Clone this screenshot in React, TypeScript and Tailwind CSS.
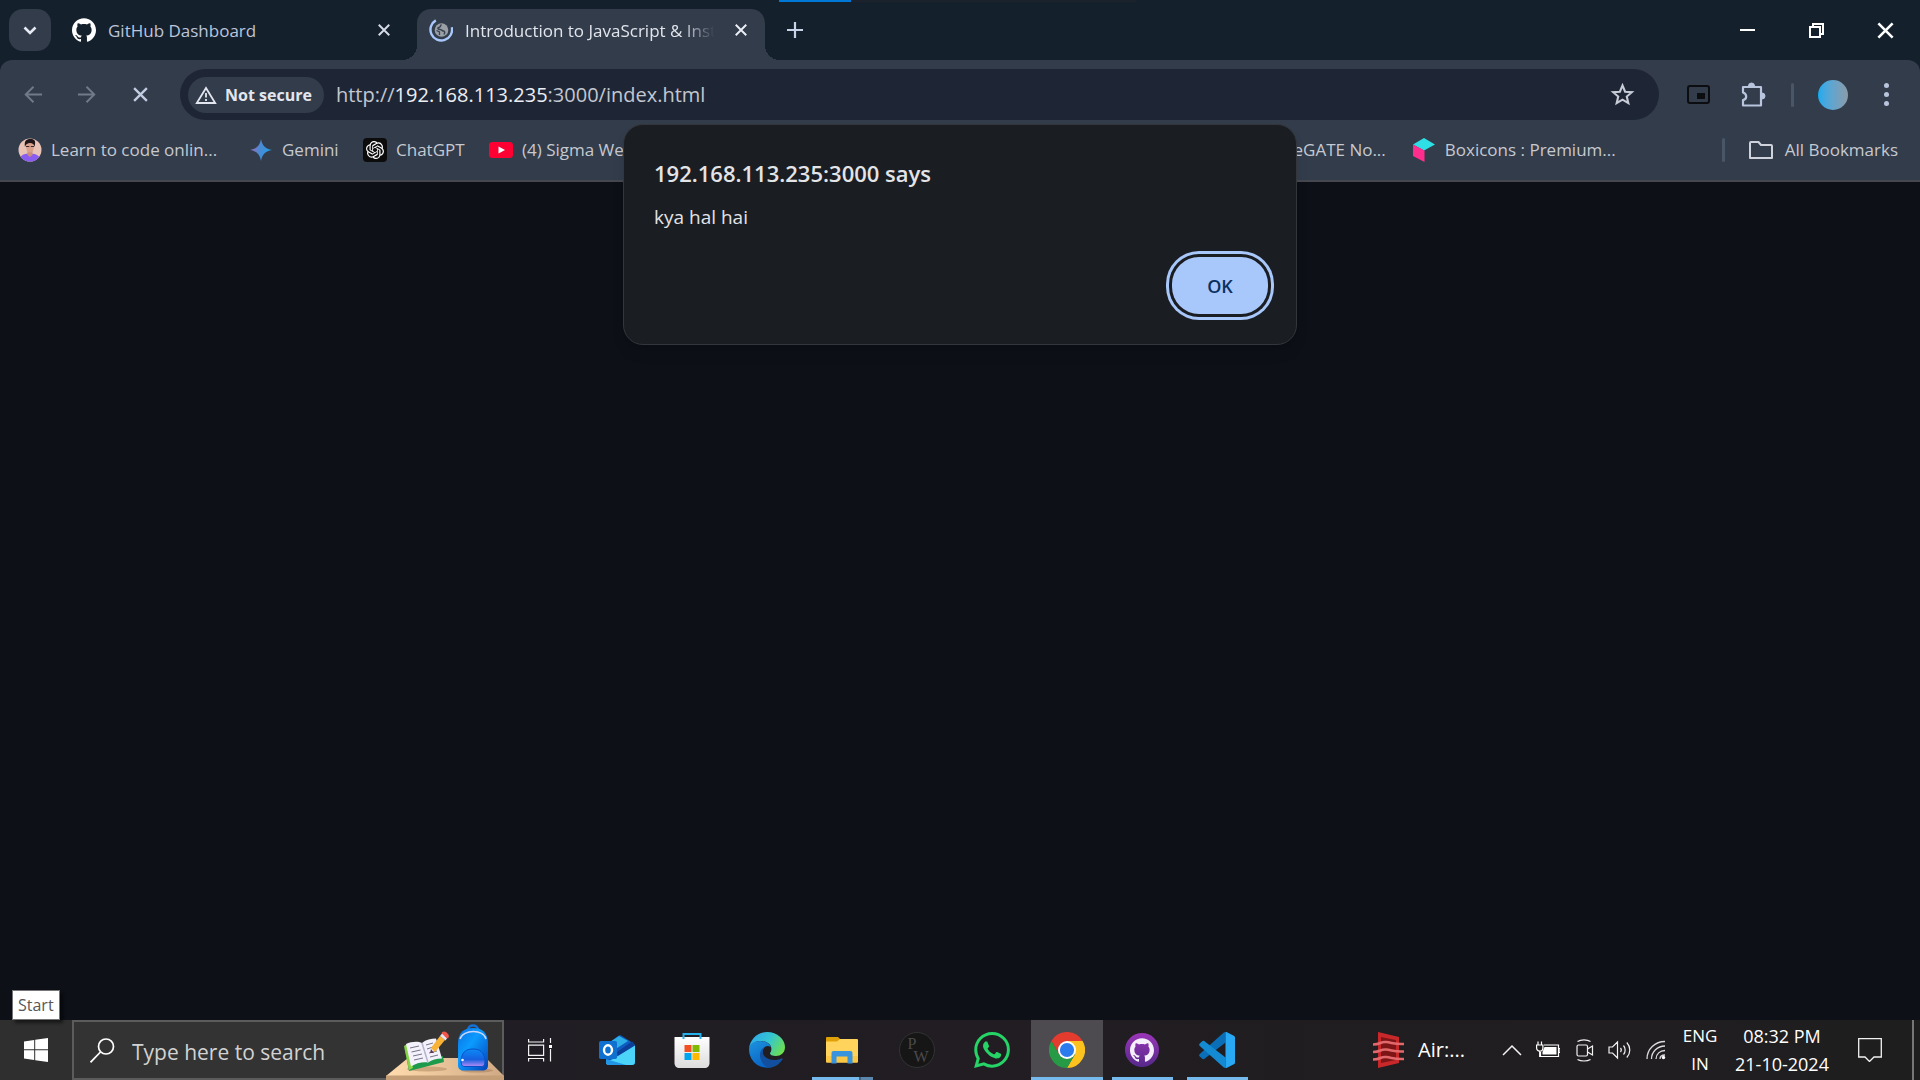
import React from "react";
import { SiGithub, SiOpenai, SiWhatsapp } from "react-icons/si";

type IconProps = { className?: string };

const XIcon = ({ className }: IconProps) => (
  <svg viewBox="0 0 16 16" className={className} fill="none" stroke="currentColor" strokeWidth="2.2">
    <path d="M2 2l12 12M14 2L2 14" />
  </svg>
);

const ArrowIcon = ({ className }: IconProps) => (
  <svg viewBox="0 0 20 20" className={className} fill="none" stroke="currentColor" strokeWidth="2">
    <path d="M19 10H2.5M10 1.8L1.8 10l8.2 8.2" />
  </svg>
);

const LoadingGlobe = ({ className }: IconProps) => (
  <svg viewBox="0 0 24 24" className={className} fill="none">
    <path d="M6.8 2.4A10.8 10.8 0 1 0 22.8 9.3" stroke="#a8c7fa" strokeWidth="2.4" />
    <circle cx="12.5" cy="12" r="6.8" fill="#9aa0a6" />
    <path d="M12.500 6.500c-1.500 1-.5 2.500-2.500 3s-1 2 1 2 2 1.500 3.500 1.500 1.500 1.500.5 3.500" stroke="#3a4350" strokeWidth="1.500" />
    <path d="M7.500 12.500l3 1.500v3" stroke="#3a4350" strokeWidth="1.300" />
  </svg>
);

const WarningIcon = ({ className }: IconProps) => (
  <svg viewBox="0 0 22 18" className={className} fill="none" stroke="#e3e6ee">
    <path d="M11 2L20.200 17H1.800z" strokeWidth="1.800" />
    <path d="M11 7v4.500M11 13v2" strokeWidth="1.800" />
  </svg>
);

const StarIcon = ({ className }: IconProps) => (
  <svg viewBox="0 0 24 24" className={className} fill="none" stroke="#c8ccd6" strokeWidth="2">
    <path d="M12 3.300l2.500 6 6.500.500-4.900 4.200 1.500 6.300L12 17l-5.600 3.300 1.500-6.300L3 9.800l6.500-.500z" />
  </svg>
);

const PuzzleIcon = ({ className }: IconProps) => (
  <svg viewBox="0 0 26 26" className={className}>
    <path d="M3 5h18v18.500H3v-5.500c4-.500 4.500-6 0-7.500z" fill="none" stroke="#b9c4dd" strokeWidth="2.200" strokeLinejoin="round" />
    <path d="M8.500 4a3 3 0 0 1 6 0zM22 11a3 3 0 0 1 0 6z" fill="#b9c4dd" stroke="#b9c4dd" />
  </svg>
);

const GeminiIcon = ({ className }: IconProps) => (
  <svg viewBox="0 0 22 22" className={className}>
    <defs>
      <linearGradient id="gem" x1="0" x2="1" y1="0.400" y2="0.600">
        <stop offset="0" stopColor="#9a6fb5" />
        <stop offset="0.450" stopColor="#4a8ad4" />
        <stop offset="1" stopColor="#1fa0e8" />
      </linearGradient>
    </defs>
    <path d="M11 0c1 6.500 4.500 10 11 11-6.500 1-10 4.500-11 11-1-6.500-4.500-10-11-11C6.500 10 10 6.500 11 0z" fill="url(#gem)" />
  </svg>
);

const PersonIcon = ({ className }: IconProps) => (
  <svg viewBox="0 0 24 24" className={className}>
    <clipPath id="face">
      <circle cx="12" cy="12" r="11.500" />
    </clipPath>
    <g clipPath="url(#face)">
      <rect width="24" height="24" fill="#e9c4b6" />
      <path d="M1 24c0-6 4-8.500 11-8.500s11 3 11 8.500z" fill="#8a5cf0" />
      <path d="M9.500 12h5v5l-2.500 2-2.500-2z" fill="#c98f7c" />
      <ellipse cx="12" cy="9" rx="4" ry="5.500" fill="#d9a28d" />
      <path d="M7 9C6 3 8 1 12.500 1S18 3 16.500 9c-.5-3-2-4-4.500-4S8 6 7 9z" fill="#20161a" />
      <path d="M8 8.500h3.300M12.800 8.500h3.200" stroke="#3c2a30" strokeWidth="1" />
    </g>
  </svg>
);

const BoxiconsIcon = ({ className }: IconProps) => (
  <svg viewBox="0 0 22 24" className={className}>
    <path d="M11 0l11 6.500L11 12.500 0 6.500z" fill="#2fdfe6" />
    <path d="M0 6.500l11.500 6V24L0 18z" fill="#ff2e8e" />
  </svg>
);

const YoutubeIcon = ({ className }: IconProps) => (
  <svg viewBox="0 0 24 16" className={className}>
    <rect width="24" height="16" rx="3.500" fill="#ff0033" />
    <path d="M9.500 4.500l6.500 3.500-6.500 3.500z" fill="#fff" />
  </svg>
);

const FolderIcon = ({ className }: IconProps) => (
  <svg viewBox="0 0 24 20" className={className} fill="none" stroke="#cfd2da" strokeWidth="2">
    <path d="M2 2h7.500l2.500 3h10a1 1 0 0 1 1 1v12H1V3a1 1 0 0 1 1-1z" strokeLinejoin="round" />
  </svg>
);

const DeskArt = ({ className }: IconProps) => (
  <svg viewBox="0 0 118 58" className={className}>
    <defs>
      <linearGradient id="desk" x1="0" x2="1">
        <stop offset="0" stopColor="#ffdcae" />
        <stop offset="1" stopColor="#d0a984" />
      </linearGradient>
      <linearGradient id="bag" x1="0" x2="1" y1="0" y2="1">
        <stop offset="0" stopColor="#0a6fe0" />
        <stop offset="0.400" stopColor="#0b9bff" />
        <stop offset="1" stopColor="#0442b8" />
      </linearGradient>
      <linearGradient id="pocket" x1="0" x2="0" y1="0" y2="1">
        <stop offset="0" stopColor="#0b8af5" />
        <stop offset="0.600" stopColor="#1660e0" />
        <stop offset="1" stopColor="#b78cf5" />
      </linearGradient>
    </defs>
    <path d="M22 36h78l18 18H0z" fill="url(#desk)" />
    <path d="M0 53.500h118V58H0z" fill="#c39e76" />
    <ellipse cx="41" cy="47" rx="20" ry="2.500" fill="#b98f68" opacity="0.600" />
    <ellipse cx="91" cy="48.500" rx="16" ry="2" fill="#a98262" opacity="0.600" />
    <path d="M18 24l5 25 35-9-1-6-33 9z" fill="#1e9a4c" />
    <path d="M18 24l5 24 4-2-6-24z" fill="#8bd346" />
    <path d="M20 22c5-2.500 12-3 16-1 4-3.500 9-4.500 14-4.500l6 20c-6 0-10 1.500-14 4-5-1-12 .5-17 4z" fill="#f3f1fb" />
    <path d="M36 21l6 19.500" stroke="#b7b3cf" strokeWidth="1.500" />
    <path d="M24 26l9-2M25.500 30l9-2M27 34l9-2M28 38l9-2M40 23l7-2M41 27l6-2M43 31l8-2M44 35l8-2" stroke="#777488" strokeWidth="1" />
    <path d="M45 27l3 4-4 0z" fill="#5b3a55" />
    <path d="M45 26l9-12 5 4-10 12z" fill="#f9b233" />
    <path d="M54 14l2.500-3 5.500 4-2.500 3.500z" fill="#e9e4ef" />
    <path d="M56.500 11c2-2 6 1 5.500 4l-1 .5z" fill="#f2564a" stroke="#f2564a" strokeWidth="1.500" />
    <path d="M82 8c0-6 10-6 10 0" fill="none" stroke="#1471d8" strokeWidth="2.500" />
    <path d="M72 22C72 10 78 6 87 6s15 4 15 16v21c0 4-2 5.500-6 5.500H78c-4 0-6-1.500-6-5.500z" fill="url(#bag)" />
    <path d="M74 17C77 7 98 7 100 17" fill="none" stroke="#c9d7ff" strokeWidth="1.500" />
    <path d="M75 38c1-8 5-11 12-11s11 3 12 11c0 5-1 6.500-4 6.500H79c-3 0-4-1.500-4-6.500z" fill="url(#pocket)" stroke="#0a4fc4" strokeWidth="1" />
    <circle cx="76.500" cy="38" r="1.300" fill="#fff" />
  </svg>
);

const TaskViewIcon = ({ className }: IconProps) => (
  <svg viewBox="0 0 24 24" className={className} fill="none" stroke="#f2f2f2" strokeWidth="1.200">
    <path d="M.6 1v3h15V1M.6 7.200h15v10.200H.6zM.6 23.500v-3h15v3M22.500 0v5M22.500 11v12.500" />
    <path d="M21 7h3v3h-3z" fill="#fff" stroke="none" />
  </svg>
);

const OutlookIcon = ({ className }: IconProps) => (
  <svg viewBox="0 0 36 36" className={className}>
    <path d="M8 12L19.500 3.700c1-.6 2-.6 3 0L34 11c1.500 1 2 2 2 3.500V30c0 2-1 3-3 3H10c-2 0-3-1-3-3z" fill="#0f5dc0" />
    <path d="M8 12L20 4l9 5-17 11z" fill="#2daee6" />
    <path d="M18 20L33 9.500c2 1.500 3 2.500 3 5L19 25z" fill="#0b3f99" />
    <path d="M14 27l22-13.500V30c0 2-1 3-3 3H10c-2 0-3-1-3-3z" fill="#4bd3fa" />
    <path d="M7 27l20 6H10c-2 0-3-1-3-3z" fill="#2195e6" />
    <rect x="0" y="9" width="18" height="18" rx="1.800" fill="#1070d0" />
    <ellipse cx="9" cy="18" rx="4" ry="4.700" fill="none" stroke="#fff" strokeWidth="2.400" />
  </svg>
);

const StoreIcon = ({ className }: IconProps) => (
  <svg viewBox="0 0 36 36" className={className}>
    <defs>
      <linearGradient id="store" x1="0" x2="0" y1="0" y2="1">
        <stop offset="0" stopColor="#fff" />
        <stop offset="1" stopColor="#dcdcdc" />
      </linearGradient>
    </defs>
    <path d="M.500 5h35v26c0 3-2 5-5 5h-25c-3 0-5-2-5-5z" fill="url(#store)" />
    <path d="M9.500 7V2h17v5" fill="none" stroke="#25b0ee" strokeWidth="2" />
    <path d="M10.500 13h7v7h-7z" fill="#f25022" />
    <path d="M18.500 13h7v7h-7z" fill="#7fba00" />
    <path d="M10.500 21h7v7h-7z" fill="#00a4ef" />
    <path d="M18.500 21h7v7h-7z" fill="#ffb900" />
  </svg>
);

const EdgeIcon = ({ className }: IconProps) => (
  <svg viewBox="0 0 36 36" className={className}>
    <defs>
      <linearGradient id="edgeTop" x1="0" x2="1" y1="0.300" y2="0.700">
        <stop offset="0" stopColor="#2fa8ea" />
        <stop offset="0.500" stopColor="#35c6d0" />
        <stop offset="1" stopColor="#6fe04a" />
      </linearGradient>
      <linearGradient id="edgeLeft" x1="0" x2="0.500" y1="0" y2="1">
        <stop offset="0" stopColor="#1c93df" />
        <stop offset="1" stopColor="#0a64c4" />
      </linearGradient>
    </defs>
    <path d="M0 17C1 7 8.500 0 18 0c10.500 0 18 7.500 18 15 0 6-4.500 9-9 9-4 0-6-1.500-6-2.600 0-1 1.400-1.500 1.400-4.400C22.400 12 17 9 11.500 9 5 9 1 13 0 17z" fill="url(#edgeTop)" />
    <path d="M0 18C0 12 5 9 11 9c6 0 10 3 11 6-5-3-8.500 1-8.500 6 0 7 6 13 11 13.500A18 18 0 0 1 0 18z" fill="url(#edgeLeft)" />
    <path d="M15 15c-3.500 3-5 7-3.500 11.500C13.500 33 18 36 22 35.500c5-1 9-4 11.500-8 .5-1-.3-1.500-1.200-1C25 30 14 27 13.700 20c0-2 .3-3.500 1.300-5z" fill="#124f9e" />
  </svg>
);

const ExplorerIcon = ({ className }: IconProps) => (
  <svg viewBox="0 0 36 36" className={className}>
    <path d="M2 6a1 1 0 0 1 1-1h11l2.500 2.500L14 10H2z" fill="#e0a008" />
    <path d="M2 9.500h11l3-2.500h17a1 1 0 0 1 1 1v21.500a1 1 0 0 1-1 1H3a1 1 0 0 1-1-1z" fill="#ffd35c" />
    <path d="M2 24h32v5.500a1 1 0 0 1-1 1H3a1 1 0 0 1-1-1z" fill="#fbc745" />
    <path d="M7.500 21a2 2 0 0 1 2-2h17a2 2 0 0 1 2 2v10.500h-5V24.500h-11v7h-5z" fill="#3a93dd" />
  </svg>
);

const MonogramIcon = () => (
  <span className="flex size-9 flex-col items-center justify-center rounded-full border border-[#343334] bg-[#161616] font-['Liberation_Serif',serif] text-base leading-[13px] text-[#4a4a4a]">
    <span className="mr-2.5">P</span>
    <span className="ml-2">W</span>
  </span>
);

const ChromeIcon = ({ className }: IconProps) => (
  <svg viewBox="0 0 36 36" className={className}>
    <path d="M2.400 9A18 18 0 0 1 33.600 9H18l-7.800 13.500z" fill="#e33b2e" />
    <path d="M33.600 9A18 18 0 0 1 18 36l7.800-13.500L18 9z" fill="#fcc31e" />
    <path d="M2.400 9A18 18 0 0 0 18 36l7.800-13.500H10.200z" fill="#269a45" />
    <circle cx="18" cy="18" r="9" fill="#fff" />
    <circle cx="18" cy="18" r="7.100" fill="#2a7bee" />
  </svg>
);

const GithubDesktopIcon = () => (
  <span className="flex size-[34px] items-center justify-center rounded-full bg-gradient-to-b from-[#9b35b8] to-[#56288a]">
    <SiGithub className="size-6 text-[#f4effa]" />
  </span>
);

const VsCodeIcon = ({ className }: IconProps) => (
  <svg viewBox="0 0 36 36" className={className}>
    <path d="M26.500 0v10.500L5.500 26.800c-.8.600-1.600.5-2.300-.1L.8 24.400c-.8-.8-.8-1.700 0-2.500L24.500.7c.6-.5 1.200-.7 2-.7z" fill="#0b6fb8" />
    <path d="M26.500 36V25.500L5.500 9.200c-.8-.6-1.600-.5-2.300.1L.8 11.600c-.8.800-.8 1.700 0 2.500L24.500 35.300c.6.500 1.200.7 2 .7z" fill="#148ad3" />
    <path d="M26.500 0c.5 0 1 .1 1.500.3l6.800 3.400c.8.400 1.200 1 1.200 1.900v24.800c0 .9-.4 1.500-1.200 1.900L28 35.700c-.5.200-1 .3-1.500.3z" fill="#29a8f4" />
  </svg>
);

const AirIcon = ({ className }: IconProps) => (
  <svg viewBox="0 0 31 36" className={className} fill="none">
    <path d="M5 0l21 5v26L5 36z" fill="#c9282a" />
    <path d="M8 5l15 3v20L8 31z" fill="#7d1517" />
    <path d="M0 12.500c8 0 7-3 13-2.500s8 2.500 18 2M0 20c8 0 7-3 13-2.500s8 2.500 18 2M0 27.500c8 0 7-3 13-2.500s8 2.500 18 2" stroke="#e2686b" strokeWidth="2.600" />
  </svg>
);

const BatteryIcon = ({ className }: IconProps) => (
  <svg viewBox="0 0 24 18" className={className} fill="none" stroke="#fff" strokeWidth="1.200">
    <path d="M8 4h14.500v11.500H4.500V11M22.500 7.500H24v4h-1.500" />
    <path d="M8.500 6h12v7.500h-14V11z" fill="#fff" stroke="none" />
    <path d="M.6 4h6.300v3a3 3 0 0 1-6.300 0zM2 4V.5M5.500 4V.5M3.700 10v6" />
  </svg>
);

const MeetIcon = ({ className }: IconProps) => (
  <svg viewBox="0 0 18 24" className={className} fill="none" stroke="#f2f2f2" strokeWidth="1.200">
    <rect x="1" y="7" width="10.500" height="11" rx="1.500" />
    <path d="M11.500 11l5-3v9l-5-3M1.500 3.500C5 1.300 11 1.300 14.500 3.500M1.500 21.500c3.500 2 9.500 2 13 0" />
  </svg>
);

const SpeakerIcon = ({ className }: IconProps) => (
  <svg viewBox="0 0 24 20" className={className} fill="none" stroke="#f2f2f2" strokeWidth="1.200">
    <path d="M1 7h3.500L9.500 2v16l-5-5H1zM12.500 8c1 1.200 1 2.800 0 4M15.500 5.500c2.200 2.500 2.200 6.500 0 9M18.800 2.500c4 4.300 4 10.700 0 15" />
  </svg>
);

const WifiIcon = ({ className }: IconProps) => (
  <svg viewBox="0 0 20 20" className={className} fill="none" stroke="#dcdcdc" strokeWidth="1.300">
    <path d="M1 19C1 9 9 1.500 19 1.500M5.500 19C5.500 11.500 11.500 6 19 6M10 19c0-5 4-8.500 9-8.500M14 19c0-2.500 2-4 5-4" />
    <circle cx="17.500" cy="17.500" r="1.700" fill="#fff" stroke="none" />
  </svg>
);

type Task = { name: string; icon: React.ReactNode; state?: "active" | "open" | "stacked" };

const tasks: Task[] = [
  { name: "Outlook", icon: <OutlookIcon className="size-9" /> },
  { name: "Microsoft Store", icon: <StoreIcon className="size-9" /> },
  { name: "Edge", icon: <EdgeIcon className="size-9" /> },
  { name: "File Explorer", icon: <ExplorerIcon className="size-9" />, state: "stacked" },
  { name: "PW", icon: <MonogramIcon /> },
  { name: "WhatsApp", icon: <SiWhatsapp className="size-9 text-[#25d366]" /> },
  { name: "Chrome", icon: <ChromeIcon className="size-9" />, state: "active" },
  { name: "GitHub Desktop", icon: <GithubDesktopIcon />, state: "open" },
  { name: "Visual Studio Code", icon: <VsCodeIcon className="size-9" />, state: "open" },
];

function TaskButton({ task }: { task: Task }) {
  const { state } = task;
  return (
    <button
      aria-label={task.name}
      className={`relative flex h-full w-[75px] items-center justify-center bg-clip-content pl-px pr-0.5 ${state === "active" ? "bg-[#4d4b50]" : ""}`}
    >
      {task.icon}
      {state === "active" && <span className="absolute bottom-0 left-px right-0.5 h-[3px] bg-[#76b9ed]" />}
      {state === "open" && <span className="absolute inset-x-[7px] bottom-0 h-[3px] bg-[#76b9ed]" />}
      {state === "stacked" && (
        <span className="absolute inset-x-[7px] bottom-0 flex h-[3px] bg-[#5a87ab]">
          <span className="mr-3 grow border-r-2 border-[#46637d] bg-[#76b9ed]" />
        </span>
      )}
    </button>
  );
}

function TabStrip() {
  return (
    <header className="relative flex h-[60px] shrink-0 items-end bg-[#15202d]">
      <button aria-label="Search tabs" className="mb-[9px] ml-[9px] flex size-[42px] items-center justify-center rounded-[14px] bg-[#323c4b]">
        <svg viewBox="0 0 14 9" className="h-[9px] w-3.5" fill="none" stroke="#e6eaf3" strokeWidth="2.600">
          <path d="M1.500 1.500L7 7l5.500-5.500" />
        </svg>
      </button>
      <div className="ml-[21px] flex h-[51px] w-[319px] items-center pb-[9px]">
        <SiGithub className="size-6 text-white" />
        <span className="ml-3 mt-0.5 grow text-[17px] leading-6 text-[#bcc5da]">GitHub Dashboard</span>
        <button aria-label="Close GitHub Dashboard">
          <XIcon className="size-3.5 text-[#d5dbe8]" />
        </button>
      </div>
      <div className="relative ml-[26px] flex h-[51px] w-[348px] items-center rounded-t-[14px] bg-[#323c4b] pb-[9px] pl-3 pr-[17px]">
        <span className="absolute -left-[15px] bottom-0 size-[15px] bg-[radial-gradient(circle_at_0_0,transparent_15px,#323c4b_15px)]" />
        <span className="absolute -right-[15px] bottom-0 size-[15px] bg-[radial-gradient(circle_at_100%_0,transparent_15px,#323c4b_15px)]" />
        <LoadingGlobe className="size-6 shrink-0" />
        <span className="ml-3 mt-0.5 w-[252px] shrink-0 overflow-hidden whitespace-nowrap text-[17px] leading-6 text-[#e2e5ec] [mask-image:linear-gradient(to_right,black_86%,transparent_99%)]">
          Introduction to JavaScript &amp; Inst
        </span>
        <button aria-label="Close tab" className="ml-auto">
          <XIcon className="size-3.5 text-[#eceff5]" />
        </button>
      </div>
      <button aria-label="New tab" className="mb-[22px] ml-[22px]">
        <svg viewBox="0 0 16 16" className="size-4" stroke="#c9d2e6" strokeWidth="2.200">
          <path d="M8 0v16M0 8h16" />
        </svg>
      </button>
      <div className="ml-auto flex h-full items-center text-white">
        <button aria-label="Minimize" className="flex h-full w-[69px] items-center justify-center">
          <span className="h-0.5 w-[15px] bg-white" />
        </button>
        <button aria-label="Restore" className="flex h-full w-[69px] items-center justify-center">
          <svg viewBox="0 0 15 15" className="size-[15px]" fill="none" stroke="#fff" strokeWidth="2">
            <path d="M1 4h10v10H1zM4 4V1h10v10h-3" />
          </svg>
        </button>
        <button aria-label="Close window" className="flex h-full w-[69px] items-center justify-center">
          <XIcon className="size-[19px]" />
        </button>
      </div>
      <span className="absolute left-[779px] top-0 flex h-0.5 w-[357px] bg-[#1b222b]">
        <span className="w-[72px] bg-[#0078d7]" />
      </span>
    </header>
  );
}

function Toolbar() {
  return (
    <div className="bg-[#15202d]">
      <div className="flex h-[60px] items-center rounded-t-xl bg-[#323c4b] pt-[9px]">
        <button aria-label="Back" className="ml-6">
          <ArrowIcon className="size-[19px] text-[#717a88]" />
        </button>
        <button aria-label="Forward" className="ml-[34px]">
          <ArrowIcon className="size-[19px] rotate-180 text-[#717a88]" />
        </button>
        <button aria-label="Stop loading" className="ml-9">
          <XIcon className="size-[17px] text-[#c2cce0]" />
        </button>
        <div className="ml-[31px] flex h-[51px] grow items-center rounded-full bg-[#1e2636] pl-2 pr-6">
          <button className="flex h-9 shrink-0 items-center gap-2 rounded-full bg-[#323c4b] pl-[7px] pr-3">
            <WarningIcon className="h-[18px] w-[22px]" />
            <span className="whitespace-nowrap text-base font-bold text-[#e3e6ee]">Not secure</span>
          </button>
          <div className="ml-3 grow whitespace-nowrap text-xl text-[#c3c7d0]">
            http://<span className="text-[#eceef3]">192.168.113.235</span>:3000/index.html
          </div>
          <button aria-label="Bookmark this page">
            <StarIcon className="size-[25px]" />
          </button>
        </div>
        <button aria-label="Picture in picture" className="ml-7 h-[19px] w-[23px] rounded-[3px] border-2 border-[#0c0d10] pl-2 pt-[3px]">
          <span className="block h-1.5 w-2 bg-[#0c0d10]" />
        </button>
        <button aria-label="Extensions" className="ml-[30px]">
          <PuzzleIcon className="size-[26px]" />
        </button>
        <span className="ml-[25px] h-6 w-[3px] rounded-full bg-[#4a5566]" />
        <button aria-label="Profile" className="ml-6 size-[30px] rounded-full bg-gradient-to-r from-[#0fabf0] to-[#8a9ba8]" />
        <button aria-label="Menu" className="ml-9 mr-[31px] flex flex-col gap-1">
          <span className="size-[5px] rounded-full bg-[#b9c4dd]" />
          <span className="size-[5px] rounded-full bg-[#b9c4dd]" />
          <span className="size-[5px] rounded-full bg-[#b9c4dd]" />
        </button>
      </div>
    </div>
  );
}

function BookmarksBar() {
  return (
    <nav className="flex h-[62px] shrink-0 items-center whitespace-nowrap border-b-2 border-[#45484f] bg-[#323c4b] text-[17px] leading-6 text-[#c6c9d0]">
      <a href="#learn" className="ml-[18px] flex w-[232px] items-center gap-[9px]">
        <PersonIcon className="size-6" />
        Learn to code onlin...
      </a>
      <a href="#gemini" className="flex w-[113px] items-center gap-[10px]">
        <GeminiIcon className="size-[22px]" />
        Gemini
      </a>
      <a href="#chatgpt" className="flex w-[126px] items-center gap-[9px]">
        <span className="flex size-6 items-center justify-center rounded-[4px] bg-[#0c0c0c]">
          <SiOpenai className="size-[18px] text-white" />
        </span>
        ChatGPT
      </a>
      <a href="#sigma" className="flex items-center gap-[9px]">
        <YoutubeIcon className="h-4 w-6" />
        (4) Sigma We
      </a>
      <a href="#gate" className="ml-auto mr-[27px]">eGATE No...</a>
      <a href="#boxicons" className="mr-[106px] flex items-center gap-[10px]">
        <BoxiconsIcon className="h-6 w-[22px]" />
        Boxicons : Premium...
      </a>
      <span className="h-6 w-[3px] rounded-full bg-[#4a5566]" />
      <a href="#all" className="ml-6 mr-[22px] flex items-center gap-3">
        <FolderIcon className="h-5 w-6" />
        All Bookmarks
      </a>
    </nav>
  );
}

function AlertDialog() {
  return (
    <div
      role="alertdialog"
      aria-labelledby="alert-title"
      aria-describedby="alert-text"
      className="absolute left-1/2 top-[124px] flex w-[674px] -translate-x-1/2 flex-col rounded-[20px] border border-[#33373b] bg-[#1a1d21] pb-[30px] pl-[30px] pr-7 pt-8 text-[#e3e4e8] shadow-lg"
    >
      <h1 id="alert-title" className="text-[22px] font-semibold leading-8">
        192.168.113.235:3000 says
      </h1>
      <p id="alert-text" className="mt-3.5 text-[19px] leading-7">
        kya hal hai
      </p>
      <button className="mt-[26px] h-[57px] w-24 self-end rounded-[27px] bg-[#a8c7fa] text-lg font-semibold text-[#0a305f] ring-3 ring-[#a8c7fa] ring-offset-3 ring-offset-[#1a1d21]">
        OK
      </button>
    </div>
  );
}

function Taskbar() {
  return (
    <footer className="relative flex h-[60px] shrink-0 items-center bg-gradient-to-r from-[#1e1d25] via-[#211d22] to-[#1f1e1f] text-white">
      <button aria-label="Start" className="flex h-full w-[72px] items-center justify-center bg-[#302f2f]">
        <svg viewBox="0 0 24 24" className="size-6" fill="#fff">
          <path d="M0 3.400l10.200-1.500V11.300H0zM11.200 1.700L24 0v11.300H11.200zM0 12.300h10.200v9.600L0 20.500zM11.200 12.300H24V24l-12.800-1.800z" />
        </svg>
      </button>
      <span className="absolute -top-[30px] left-3 border border-[#767676] bg-white px-[5px] text-base leading-7 text-[#575757] shadow-[3px_3px_3px_rgba(0,0,0,0.5)]">
        Start
      </span>
      <label className="relative flex h-full w-[432px] items-center border-2 border-[#5c5c5c] bg-[#333333]">
        <svg viewBox="0 0 25 25" className="ml-4 size-[25px] shrink-0" fill="none" stroke="#fff" strokeWidth="1.700">
          <circle cx="16" cy="8.500" r="7.500" />
          <path d="M10.500 14L.5 24.300" />
        </svg>
        <input
          aria-label="Search"
          placeholder="Type here to search"
          className="ml-[17px] w-56 bg-transparent pt-1 text-[21px] leading-7 outline-none placeholder:text-[#d2d2d2]"
        />
        <DeskArt className="absolute -bottom-0.5 -right-0.5 h-[58px] w-[118px]" />
      </label>
      <button aria-label="Task view" className="mr-1 flex h-full w-[72px] items-center justify-center">
        <TaskViewIcon className="size-6" />
      </button>
      {tasks.map((t) => (
        <TaskButton key={t.name} task={t} />
      ))}
      <div className="ml-auto flex h-full items-center">
        <button className="mr-[37px] flex items-center gap-3.5 text-xl">
          <AirIcon className="h-9 w-[31px]" />
          Air:...
        </button>
        <button aria-label="Hidden icons">
          <svg viewBox="0 0 20 12" className="h-3 w-5" fill="none" stroke="#f2f2f2" strokeWidth="1.500">
            <path d="M1 11l9-9 9 9" />
          </svg>
        </button>
        <BatteryIcon className="ml-3.5 h-[18px] w-6" />
        <MeetIcon className="ml-4 h-6 w-[18px]" />
        <SpeakerIcon className="ml-3.5 h-5 w-6" />
        <WifiIcon className="ml-3.5 size-5" />
        <div className="ml-3.5 flex w-10 flex-col items-center text-[17px] leading-7">
          <span>ENG</span>
          <span>IN</span>
        </div>
        <div className="ml-3.5 flex w-24 flex-col items-center whitespace-nowrap text-lg leading-7">
          <span>08:32 PM</span>
          <span>21-10-2024</span>
        </div>
        <button aria-label="Notifications" className="ml-7">
          <svg viewBox="0 0 24 24" className="size-6" fill="none" stroke="#f2f2f2" strokeWidth="1.300">
            <path d="M.7.700h22.600V19H16l-4.500 4.500L7 19H.7z" />
          </svg>
        </button>
        <span className="ml-[30px] mr-1.5 h-full w-0.5 bg-[#767676]" />
      </div>
    </footer>
  );
}

export default function App() {
  return (
    <div className="relative flex h-screen flex-col overflow-hidden bg-[#0d1017] font-['Open_Sans',sans-serif]">
      <TabStrip />
      <Toolbar />
      <BookmarksBar />
      <main className="grow" />
      <Taskbar />
      <AlertDialog />
    </div>
  );
}
